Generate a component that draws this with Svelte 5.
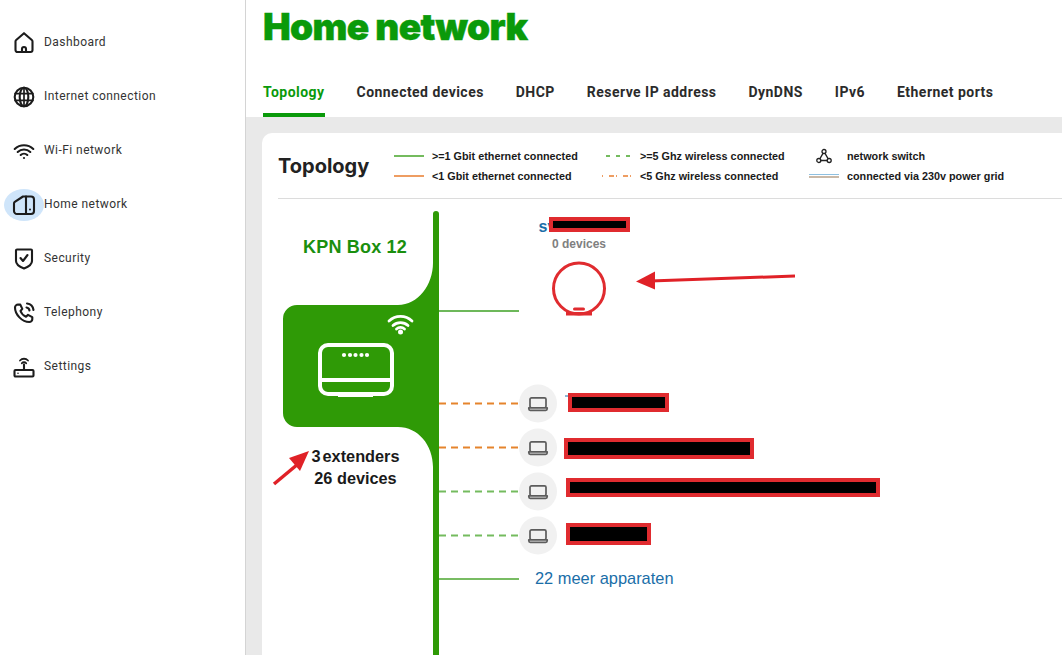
<script lang="ts">
  const nav = [
    { label: 'Dashboard', icon: 'home' },
    { label: 'Internet connection', icon: 'globe' },
    { label: 'Wi-Fi network', icon: 'wifi' },
    { label: 'Home network', icon: 'network', active: true },
    { label: 'Security', icon: 'shield' },
    { label: 'Telephony', icon: 'phone' },
    { label: 'Settings', icon: 'router' }
  ];
  const tabs = ['Topology', 'Connected devices', 'DHCP', 'Reserve IP address', 'DynDNS', 'IPv6', 'Ethernet ports'];
  const devices = [
    { y: 403.5, color: '#e5842c', bar: { x: 568, y: 393, w: 101, h: 19 } },
    { y: 447.5, color: '#e5842c', bar: { x: 564, y: 438, w: 190, h: 21 } },
    { y: 491.5, color: '#74bb5e', bar: { x: 566, y: 478, w: 314, h: 19 } },
    { y: 535.5, color: '#74bb5e', bar: { x: 566, y: 523, w: 85, h: 22 } }
  ];
</script>

<div class="page">
  <nav class="sidebar">
    {#each nav as item}
      <a class="nav-item" class:active={item.active} href="#top">
        <span class="nav-icon">
          <svg viewBox="0 0 24 24" width="24" height="24" fill="none" stroke="#1c1c1c" stroke-width="2.100" stroke-linecap="round" stroke-linejoin="round">
            {#if item.icon === 'home'}
              <path d="M3.500 19v-8.500a2 2 0 0 1 .7-1.500L12 2.200 19.800 9a2 2 0 0 1 .7 1.500V19a2 2 0 0 1-2 2h-13a2 2 0 0 1-2-2z" />
              <path d="M10 21v-3a2 2 0 0 1 4 0v3" />
            {:else if item.icon === 'globe'}
              <circle cx="12" cy="12" r="9.300" />
              <ellipse cx="12" cy="12" rx="4.300" ry="9.300" />
              <path d="M12 2.700v18.600M3.200 8.700h17.600M3.200 15.300h17.600" stroke-width="1.700" />
            {:else if item.icon === 'wifi'}
              <path d="M2.700 10a13.500 13.500 0 0 1 18.600 0M5.700 13a9.200 9.200 0 0 1 12.600 0M8.700 16a4.800 4.800 0 0 1 6.600 0" />
              <circle cx="12" cy="19" r="1.100" fill="#1c1c1c" stroke="none" />
            {:else if item.icon === 'network'}
              <path d="M14 3.500h5a3 3 0 0 1 3 3V18a3 3 0 0 1-3 3H5a3 3 0 0 1-3-3V10.500a2 2 0 0 1 .8-1.600L11 3.500z" />
              <path d="M14 3.500V21" />
              <circle cx="18" cy="16.500" r="1" fill="#1c1c1c" stroke="none" />
            {:else if item.icon === 'shield'}
              <path d="M5 2.500h14a1 1 0 0 1 1 1V14c0 3-4 6-8 7.500C8 20 4 17 4 14V3.500a1 1 0 0 1 1-1z" />
              <path d="M8.500 11l2.500 3 4.500-6" />
            {:else if item.icon === 'phone'}
              <path d="M6 3.500l2.300.1 2 4.300-1.800 2.100c.9 2.500 3 4.700 5.500 5.700l2-1.800 4.300 2.200v2.200c0 1.500-1.500 2.700-3 2.700C10 21 3 13.500 3 6.500c0-1.500 1.500-3 3-3z" />
              <path d="M14.500 6.500a3.500 3.500 0 0 1 3 3M15 2.500a7.500 7.500 0 0 1 6.500 6.500" />
            {:else if item.icon === 'router'}
              <rect x="2.500" y="15" width="19" height="6.500" rx="1" />
              <path d="M12 15V9.500" />
              <path d="M8 5.500a5.500 5.500 0 0 1 8 0M9.800 8.300a2.800 2.800 0 0 1 4.400 0" stroke-width="1.800" />
              <circle cx="6" cy="18.200" r=".8" fill="#1c1c1c" stroke="none" />
            {/if}
          </svg>
        </span>
        <span>{item.label}</span>
      </a>
    {/each}
  </nav>

  <main class="main">
    <header class="header">
      <h1>Home network</h1>
      <div class="tabs">
        {#each tabs as tab, i}
          <span class="tab" class:selected={i === 0}>{tab}</span>
        {/each}
      </div>
    </header>

    <section class="content">
      <div class="card">
        <div class="card-head">
          <h2>Topology</h2>
          <div class="legend">
            <div class="key"><i class="swatch solid green"></i>&gt;=1 Gbit ethernet connected</div>
            <div class="key"><i class="swatch dashed green"></i>&gt;=5 Ghz wireless connected</div>
            <div class="key">
              <i class="swatch none">
                <svg viewBox="0 0 16 16" width="16" height="16" fill="none" stroke="#222" stroke-width="1.300">
                  <circle cx="8" cy="3.500" r="2" />
                  <circle cx="2.800" cy="12.500" r="2" />
                  <circle cx="13.200" cy="12.500" r="2" />
                  <path d="M7 5.300L3.800 10.800M9 5.300l3.200 5.500M4.800 12.500h6.400" />
                </svg>
              </i>network switch
            </div>
            <div class="key"><i class="swatch solid orange"></i>&lt;1 Gbit ethernet connected</div>
            <div class="key"><i class="swatch dashed orange"></i>&lt;5 Ghz wireless connected</div>
            <div class="key"><i class="swatch grid"></i>connected via 230v power grid</div>
          </div>
        </div>

        <div class="diagram">
          <svg class="canvas" viewBox="262 199 800 456" width="800" height="456">
            <path
              fill="#2f9a06"
              d="M433 214a3 3 0 0 1 6 0V655h-6V467C433 445 418 427 398 427H297a14 14 0 0 1-14-14V319a14 14 0 0 1 14-14H398C418 305 433 285 433 263Z"
            />

            <!-- box -->
            <g fill="none" stroke="#fff" stroke-width="4">
              <rect x="320" y="345" width="72" height="49" rx="8" />
              <path d="M320 380h72" />
            </g>
            <rect x="338" y="394" width="35" height="3" fill="#fff" />
            <g fill="#fff">
              <circle cx="344" cy="355" r="2.100" />
              <circle cx="350" cy="355" r="2.100" />
              <circle cx="355.500" cy="355" r="2.100" />
              <circle cx="361.500" cy="355" r="2.100" />
              <circle cx="367" cy="355" r="2.100" />
              <circle cx="400.500" cy="332" r="2.500" />
            </g>
            <g fill="none" stroke="#fff" stroke-width="2.800" stroke-linecap="round">
              <path d="M389 321a16.500 16.500 0 0 1 23 0M393 325.500a11 11 0 0 1 15 0M396.500 329a6 6 0 0 1 8 0" />
            </g>

            <!-- extender -->
            <path d="M439 311h80" stroke="#6db85a" stroke-width="2" />
            <circle cx="579" cy="288.500" r="25.500" fill="none" stroke="#e02b2f" stroke-width="3" />
            <rect x="566" y="312" width="26" height="3.500" fill="#e02b2f" />
            <rect x="573" y="307.500" width="12" height="3" rx="1.500" fill="#e02b2f" />
            <text x="538.500" y="232" class="sv">sv</text>
            <rect x="551" y="219" width="77" height="11" fill="#000" stroke="#e02b2f" stroke-width="4" />
            <text x="579" y="248" class="count" text-anchor="middle">0 devices</text>

            <!-- arrows -->
            <path d="M795 276L650 281" stroke="#e02127" stroke-width="3" />
            <path d="M636 281.500l19-10v18z" fill="#e02127" />
            <path d="M274 484L298 464" stroke="#e02127" stroke-width="3.500" />
            <path d="M309 451l-20 7 11 13z" fill="#e02127" />

            <!-- devices -->
            <path d="M565 396h4" stroke="#1a6ea8" stroke-width="1" />
            {#each devices as d}
              <path d="M439 {d.y}h80" stroke={d.color} stroke-width="2" stroke-dasharray="7 5" />
              <circle cx="538" cy={d.y} r="19" fill="#f1f1f1" />
              <g fill="none" stroke="#5c5c5c" stroke-width="1.700" stroke-linejoin="round" transform="translate(528 {d.y - 6.500})">
                <rect x="2" y=".8" width="16" height="10" rx="1.500" />
                <path d="M.8 10.800h18.400v1a1.500 1.500 0 0 1-1.500 1.500H2.300a1.500 1.500 0 0 1-1.500-1.500z" fill="#f1f1f1" />
              </g>
              <rect x={d.bar.x + 2} y={d.bar.y + 2} width={d.bar.w - 4} height={d.bar.h - 4} fill="#000" stroke="#e02b2f" stroke-width="4" />
            {/each}

            <path d="M439 579h80" stroke="#4ba62f" stroke-width="1.500" />
          </svg>

          <div class="box-name">KPN Box 12</div>
          <div class="box-count"><span class="tight">3 extenders</span><br />26 devices</div>
          <div class="more">22 meer apparaten</div>
        </div>
      </div>
    </section>
  </main>
</div>

<style>
  :global(body) {
    margin: 0;
    background: #fff;
    overflow: hidden;
  }
  .page {
    display: flex;
    width: 1062px;
    height: 655px;
    overflow: hidden;
    font-family: "Liberation Sans", Arial, sans-serif;
  }
  .sidebar {
    flex: 0 0 245px;
    box-sizing: border-box;
    padding-top: 16px;
  }
  .nav-item {
    display: flex;
    align-items: center;
    height: 54px;
    padding-bottom: 2px;
    box-sizing: border-box;
    color: #333;
    text-decoration: none;
    font: 400 12px Roboto, sans-serif;
    letter-spacing: 0.45px;
  }
  .nav-icon {
    display: flex;
    align-items: center;
    justify-content: center;
    width: 40px;
    height: 32px;
    margin-left: 4px;
    border-radius: 50%;
    position: relative;
    top: 1px;
  }
  .active .nav-icon {
    background: #cfe5fa;
  }
  .main {
    flex: 1;
    min-width: 0;
    display: flex;
    flex-direction: column;
    border-left: 1px solid #d4d4d4;
  }
  .header {
    height: 117px;
    flex: none;
    box-sizing: border-box;
    padding: 0 0 0 17px;
    display: flex;
    flex-direction: column;
  }
  h1 {
    margin: 4px 0 0;
    height: 45px;
    color: #0a9a0a;
    font: 900 37px/45px Inter, sans-serif;
    letter-spacing: -0.65px;
    -webkit-text-stroke: 0.5px #0a9a0a;
  }
  .tabs {
    display: flex;
    gap: 32px;
    margin-top: auto;
  }
  .tab {
    height: 36px;
    box-sizing: border-box;
    padding-top: 1px;
    color: #2b2b2b;
    font: 700 14px/20px Roboto, sans-serif;
    letter-spacing: 0.46px;
  }
  .tab.selected {
    color: #0a9a0a;
    border-bottom: 4px solid #0a9a0a;
  }
  .content {
    flex: 1;
    min-height: 0;
    background: #e9e9e9;
    padding: 16px 0 0 16px;
  }
  .card {
    height: 100%;
    background: #fff;
    border-radius: 10px 0 0 0;
    padding: 0 0 0 16px;
    box-sizing: border-box;
    display: flex;
    flex-direction: column;
  }
  .card-head {
    flex: none;
    height: 66px;
    box-sizing: border-box;
    display: flex;
    border-bottom: 1px solid #dcdcdc;
  }
  h2 {
    margin: 0;
    width: 116px;
    flex: none;
    padding-top: 21px;
    color: #222;
    font: 700 20px/24px Inter, sans-serif;
    letter-spacing: 0;
  }
  .legend {
    display: grid;
    grid-template-columns: 208px 207px 1fr;
    grid-auto-rows: 20px;
    padding-top: 13px;
    color: #1a1a1a;
    font-size: 10.800px;
    font-weight: 700;
    line-height: 20px;
  }
  .key {
    display: flex;
    align-items: center;
    gap: 8px;
    white-space: nowrap;
  }
  .swatch {
    width: 30px;
    flex: none;
    display: flex;
    justify-content: center;
  }
  .solid.green {
    border-top: 2px solid #74bb5e;
  }
  .solid.orange {
    border-top: 2px solid #ee9d62;
  }
  .dashed {
    height: 1.500px;
  }
  .dashed.green {
    background: repeating-linear-gradient(90deg, transparent 0 4px, #74bb5e 4px 8px, transparent 8px 10px);
  }
  .dashed.orange {
    background: repeating-linear-gradient(90deg, #ee9d62 0 1px, transparent 1px 7px, #ee9d62 7px 12px, transparent 12px 14px);
  }
  .grid {
    height: 4px;
    background: linear-gradient(#8fc0e0 0 1.500px, #fff 1.500px 2px, #c9b9a8 2px);
  }
  .diagram {
    flex: 1;
    min-height: 0;
    position: relative;
  }
  .canvas {
    position: absolute;
    left: -16px;
    top: 0;
    display: block;
  }
  .sv {
    fill: #1a6ea8;
    font: 700 16px "Liberation Sans", sans-serif;
  }
  .count {
    fill: #808080;
    font: 700 12px "Liberation Sans", sans-serif;
  }
  .box-name {
    position: absolute;
    left: 25px;
    top: 37px;
    color: #1a8f0e;
    font-size: 18px;
    font-weight: 700;
    line-height: 22px;
    letter-spacing: 0.2px;
  }
  .box-count {
    position: absolute;
    left: 0;
    width: 155px;
    top: 246px;
    text-align: center;
    color: #1a1a1a;
    font-size: 16.300px;
    font-weight: 700;
    line-height: 22px;
  }
  .tight {
    word-spacing: -2.500px;
  }
  .more {
    position: absolute;
    left: 257px;
    top: 369px;
    color: #1a6ea8;
    font-size: 16.400px;
    line-height: 20px;
  }
</style>
